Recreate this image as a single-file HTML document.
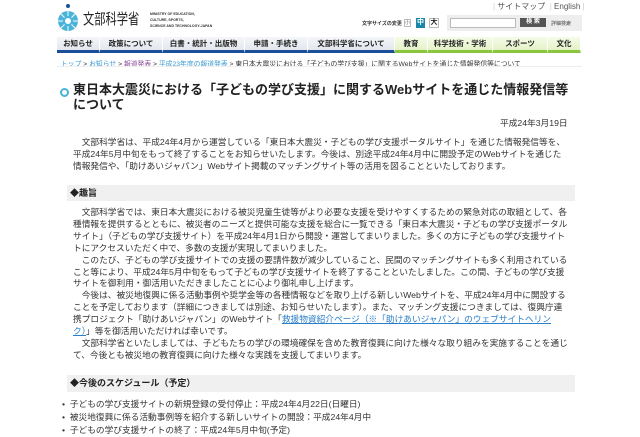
<!DOCTYPE html>
<html><head><meta charset="utf-8"><style>
*{margin:0;padding:0;box-sizing:border-box}
body{width:640px;height:426px;overflow:hidden;background:#fff;font-family:"Liberation Sans","Noto Sans CJK JP",sans-serif;color:#333;position:relative}
.a{position:absolute;white-space:nowrap}
.nav div{position:absolute;top:37px;height:16px;font-size:7.5px;font-weight:bold;text-align:center;line-height:14px;color:#222;border-right:1px solid #fff}
.nl{background:linear-gradient(#f4f6f9,#e3e7ee);border-bottom:3px solid #1c4f9a}
.nr{background:linear-gradient(#f6fbe9,#e4f2c6);border-bottom:3px solid #8cc63f}
.p{position:absolute;left:73px;font-size:8.7px;line-height:11.9px;white-space:nowrap;color:#333}
.bar{position:absolute;left:67px;width:508px;height:16px;background:#f0f0f0;font-size:9px;font-weight:bold;line-height:16px;padding-left:3px;color:#222}
a{color:#2a7fc9;text-decoration:underline}
</style></head><body>
<svg class="a" style="left:56px;top:3px" width="26" height="30" viewBox="0 0 26 30">
<circle cx="12" cy="3" r="2" fill="#1c4f9a"/>
<circle cx="12" cy="18" r="10" fill="#49b3d8"/>
<g stroke="#fff" stroke-width="1">
<line x1="12" y1="8" x2="12" y2="28"/><line x1="2" y1="18" x2="22" y2="18"/>
<line x1="5" y1="11" x2="19" y2="25"/><line x1="19" y1="11" x2="5" y2="25"/>
</g><circle cx="12" cy="18" r="5" fill="#49b3d8"/><circle cx="12" cy="18" r="3" fill="#fff"/>
</svg>
<div class="a" style="left:83px;top:8px;font-size:15px;color:#222;transform:scaleX(0.75);transform-origin:0 0">文部科学省</div>
<div class="a" style="left:150px;top:11px;font-size:3.5px;line-height:6px;color:#333;font-weight:bold">MINISTRY OF EDUCATION,<br>CULTURE, SPORTS,<br>SCIENCE AND TECHNOLOGY-JAPAN</div>
<div class="a" style="left:493px;top:1px;font-size:8px;color:#555;line-height:12px"><span style="color:#ccc">|</span> サイトマップ &nbsp;<span style="color:#ccc">|</span> English <span style="color:#ccc">|</span></div>
<div class="a" style="left:447px;top:15px;width:135px;height:16px;background:#eee"></div>
<div class="a" style="left:362px;top:20px;font-size:5px;color:#333;font-weight:bold">文字サイズの変更</div>
<div class="a" style="left:404px;top:19px;width:7px;height:8px;border:1px solid #bbb;font-size:5px;text-align:center;line-height:6px;color:#666">小</div>
<div class="a" style="left:416px;top:18px;width:9px;height:10px;background:#1a86a8;color:#fff;font-size:7px;font-weight:bold;text-align:center;line-height:10px">中</div>
<div class="a" style="left:429px;top:18px;width:10px;height:10px;border:1px solid #bbb;background:#fff;color:#222;font-size:7px;font-weight:bold;text-align:center;line-height:8px">大</div>
<div class="a" style="left:450px;top:18px;width:66px;height:10px;border:1px solid #bbb;background:#fff"></div>
<div class="a" style="left:520px;top:18px;width:26px;height:9px;background:#555;color:#fff;font-size:6px;text-align:center;line-height:9px;font-weight:bold">検 索</div>
<div class="a" style="left:551px;top:20px;font-size:5px;color:#444">詳細検索</div>
<div class="nav">
<div class="nl" style="left:57px;width:43px">お知らせ</div>
<div class="nl" style="left:100px;width:63px">政策について</div>
<div class="nl" style="left:163px;width:82px">白書・統計・出版物</div>
<div class="nl" style="left:245px;width:63px">申請・手続き</div>
<div class="nl" style="left:308px;width:87px">文部科学省について</div>
<div class="nr" style="left:395px;width:33px">教育</div>
<div class="nr" style="left:428px;width:65px">科学技術・学術</div>
<div class="nr" style="left:493px;width:55px">スポーツ</div>
<div class="nr" style="left:548px;width:33px">文化</div>
</div>
<div class="a" style="left:61px;top:58px;font-size:6.8px;color:#333"><span style="color:#3a9bd0">トップ</span> &gt; <span style="color:#3a9bd0">お知らせ</span> &gt; <span style="color:#8a4a9a">報道発表</span> &gt; <span style="color:#3a9bd0">平成23年度の報道発表</span> &gt; 東日本大震災における「子どもの学び支援」に関するWebサイトを通じた情報発信等について</div>
<div class="a" style="left:57px;top:66px;width:525px;height:1px;background:#eee"></div>
<div class="a" style="left:60px;top:88px;width:9px;height:9px;border-radius:50%;border:2.5px solid #49b3d8"></div>
<div class="a" style="left:73px;top:83px;font-size:13px;line-height:14.5px;font-weight:bold;color:#222">東日本大震災における「子どもの学び支援」に関するWebサイトを通じた情報発信等<br>について</div>
<div class="a" style="left:500px;top:116px;width:63px;text-align:right;font-size:8.7px;color:#333">平成24年3月19日</div>
<div class="p" style="top:137px">　文部科学省は、平成24年4月から運営している「東日本大震災・子どもの学び支援ポータルサイト」を通じた情報発信等を、<br>平成24年5月中旬をもって終了することをお知らせいたします。今後は、別途平成24年4月中に開設予定のWebサイトを通じた<br>情報発信や、「助けあいジャパン」Webサイト掲載のマッチングサイト等の活用を図ることといたしております。</div>
<div class="bar" style="top:185px">◆趣旨</div>
<div class="p" style="top:207px">　文部科学省では、東日本大震災における被災児童生徒等がより必要な支援を受けやすくするための緊急対応の取組として、各<br>種情報を提供するとともに、被災者のニーズと提供可能な支援を総合に一覧できる「東日本大震災・子どもの学び支援ポータル<br>サイト」（子どもの学び支援サイト）を平成24年4月1日から開設・運営してまいりました。多くの方に子どもの学び支援サイト<br>トにアクセスいただく中で、多数の支援が実現してまいりました。<br>　このたび、子どもの学び支援サイトでの支援の要請件数が減少していること、民間のマッチングサイトも多く利用されている<br>こと等により、平成24年5月中旬をもって子どもの学び支援サイトを終了することといたしました。この間、子どもの学び支援<br>サイトを御利用・御活用いただきましたことに心より御礼申し上げます。<br>　今後は、被災地復興に係る活動事例や奨学金等の各種情報などを取り上げる新しいWebサイトを、平成24年4月中に開設する<br>ことを予定しております（詳細につきましては別途、お知らせいたします）。また、マッチング支援につきましては、復興庁連<br>携プロジェクト「助けあいジャパン」のWebサイト「<a>救援物資紹介ページ（※「助けあいジャパン」のウェブサイトへリン</a><br><a>ク）</a>」等を御活用いただければ幸いです。<br>　文部科学省といたしましては、子どもたちの学びの環境確保を含めた教育復興に向けた様々な取り組みを実施することを通じ<br>て、今後とも被災地の教育復興に向けた様々な実践を支援してまいります。</div>
<div class="bar" style="top:375px;height:17px;line-height:17px">◆今後のスケジュール（予定）</div>
<div class="p" style="left:62px;top:398px;line-height:13px">•&nbsp; 子どもの学び支援サイトの新規登録の受付停止：平成24年4月22日(日曜日)<br>•&nbsp; 被災地復興に係る活動事例等を紹介する新しいサイトの開設：平成24年4月中<br>•&nbsp; 子どもの学び支援サイトの終了：平成24年5月中旬(予定)</div>
</body></html>
